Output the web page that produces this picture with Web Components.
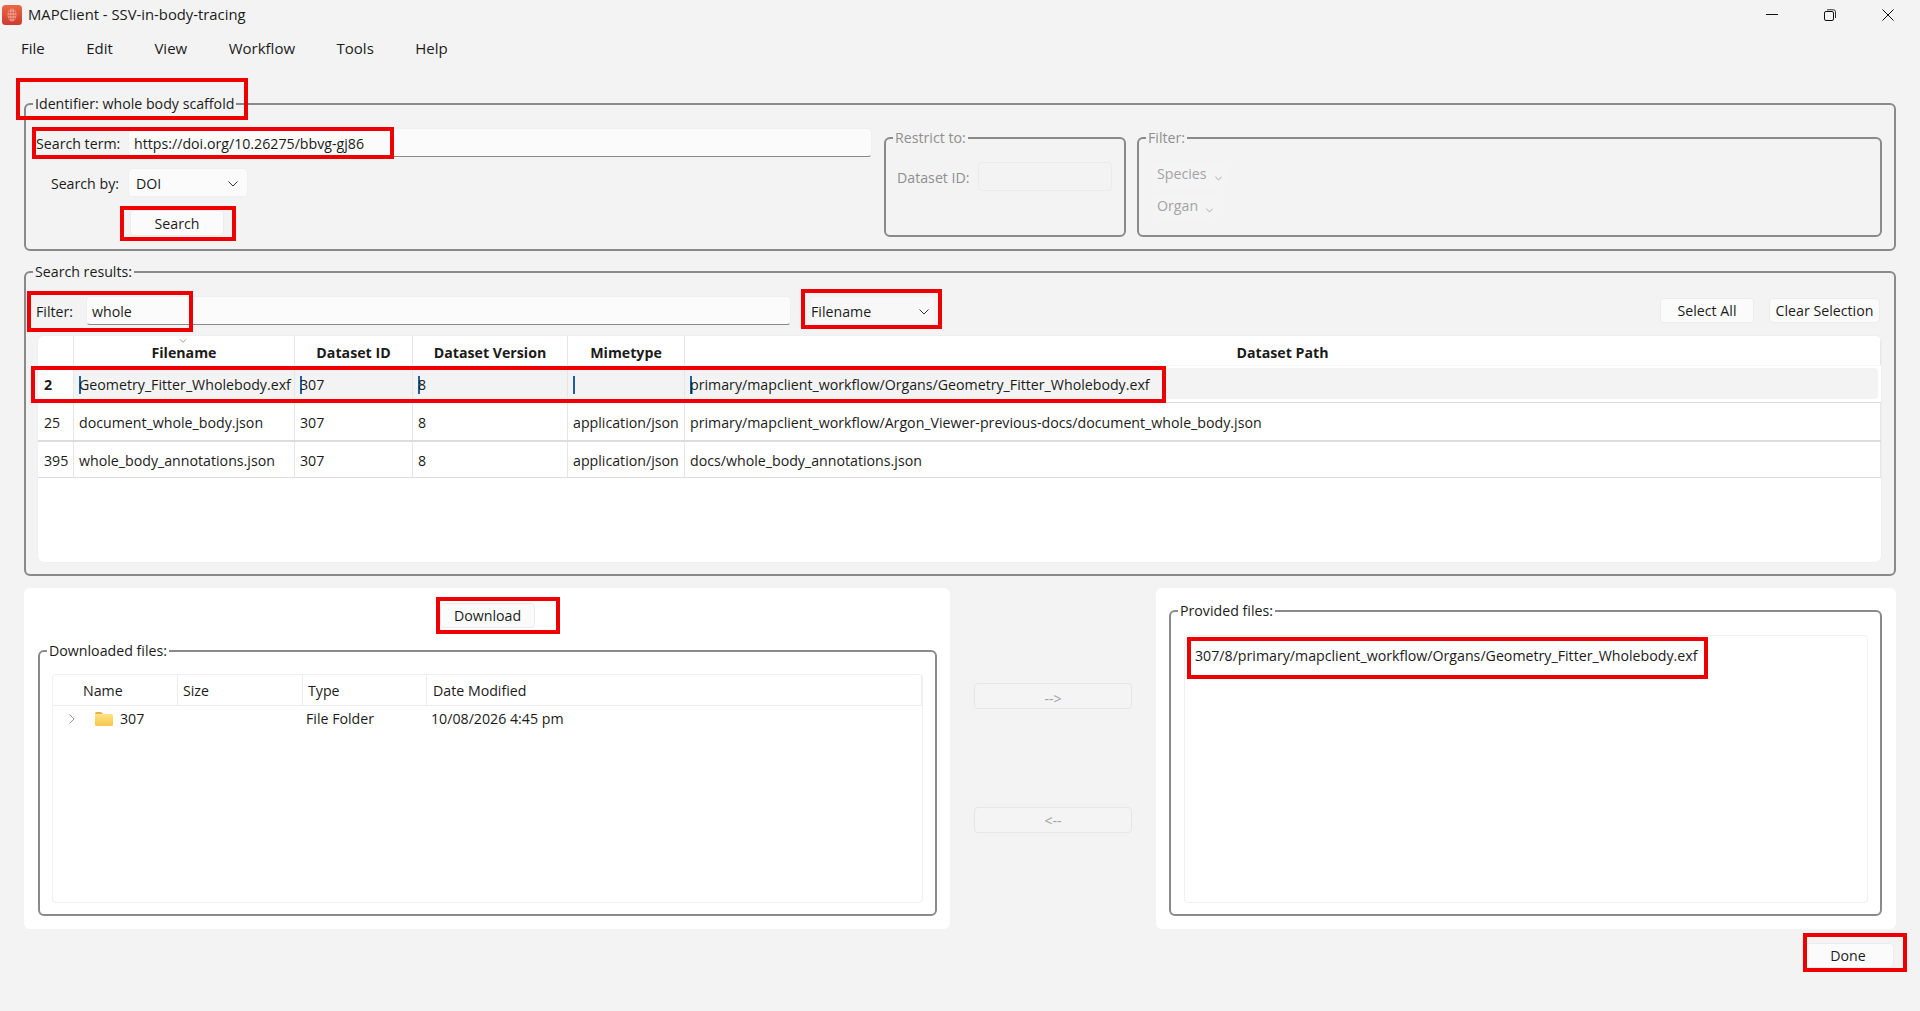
<!DOCTYPE html>
<html>
<head>
<meta charset="utf-8">
<title>MAPClient</title>
<style>
  html, body { margin: 0; height: 100%; background: #f3f3f3; overflow: hidden; }
  body { font: 14.2px/20px "Open Sans", "Noto Sans", "Liberation Sans", sans-serif; color: #1b1b1b; }
</style>
</head>
<body>
<map-client></map-client>

<script>
// shared bits for the small controls
const CHEVRON = `<svg width="10" height="6" viewBox="0 0 10 6"><path d="M.5.5 5 5 9.5.5" fill="none" stroke="currentColor" stroke-width="1"/></svg>`;

// BUTTON
class UiButton extends HTMLElement {
    constructor(){
        super();
        this.attachShadow({mode:"open"});
        this.shadowRoot.innerHTML = `
        <style>
          :host { display: flex; align-items: center; justify-content: center; box-sizing: border-box; height: 26px; padding-top: 1px;
                  background: #fbfbfb; border: 1px solid #ececec; border-radius: 4px; }
          :host([disabled]) { background: #f4f4f4; border-color: #e6e6e6; color: #a3a3a3; }
        </style>
        <slot></slot>`;
    }
}
customElements.define("ui-button", UiButton);

// LINE EDIT
class UiInput extends HTMLElement {
    constructor(){
        super();
        this.attachShadow({mode:"open"});
        this.shadowRoot.innerHTML = `
        <style>
          :host { display: flex; align-items: center; box-sizing: border-box; height: 29px; padding: 2px 5px 0;
                  background: #fbfbfb; border: 1px solid #efefef; border-bottom-color: #8a8a8a; border-radius: 4px; }
          :host([disabled]) { background: #f3f3f3; border-color: #ebebeb; }
        </style>
        <slot></slot>`;
    }
}
customElements.define("ui-input", UiInput);

// COMBO BOX
class UiCombo extends HTMLElement {
    constructor(){
        super();
        this.attachShadow({mode:"open"});
        this.shadowRoot.innerHTML = `
        <style>
          :host { display: flex; align-items: center; justify-content: space-between; box-sizing: border-box; height: 29px;
                  padding: 2px 9px 0 7px; background: #fbfbfb; border: 1px solid #f0f0f0; border-radius: 4px; }
          :host([flat]) { height: 24px; padding: 0 4px; background: #f4f4f4; border: 0; color: #a3a3a3; }
          :host([flat]) svg { width: 7px; height: 5px; margin-top: 8px; }
          svg { display: block; flex: none; color: #333; }
          :host([flat]) svg { color: #888; }
        </style>
        <slot></slot>${CHEVRON}`;
    }
}
customElements.define("ui-combo", UiCombo);

// GROUP BOX - a real fieldset so the legend cuts the frame line
class GroupBox extends HTMLElement {
    constructor(){
        super();
        this.attachShadow({mode:"open"});
        this.shadowRoot.innerHTML = `
        <style>
          :host { display: flex; flex-direction: column; box-sizing: border-box; }
          fieldset { flex: 1; display: flex; flex-direction: column; min-width: 0; min-height: 0; margin: 0;
                     padding: var(--pad, 14px 12px 12px 10px); border: 2px solid #8a8a8a; border-radius: 6px; }
          legend { padding: 0 2px; margin-left: var(--lg, -3px); line-height: 20px; }
          :host([disabled]) fieldset { color: #8f8f8f; }
        </style>
        <fieldset><legend></legend><slot></slot></fieldset>`;
    }
    connectedCallback(){
        this.shadowRoot.querySelector("legend").textContent = this.getAttribute("label");
    }
}
customElements.define("group-box", GroupBox);

// TITLE BAR
class TitleBar extends HTMLElement {
    constructor(){
        super();
        this.attachShadow({mode:"open"});
        this.shadowRoot.innerHTML = `
        <style>
          :host { display: flex; align-items: center; box-sizing: border-box; height: 30px; padding: 0 26px 2px 2px; font-size: 14.8px; }
          .logo { flex: none; margin-right: 6px; margin-top: 2px; }
          .title { flex: 1; }
          .ctl { display: flex; gap: 46px; align-items: center; margin-top: 2px; }
          svg { display: block; }
        </style>
        <svg class="logo" width="20" height="20" viewBox="0 0 20 20">
          <defs><linearGradient id="lg" x1="0" y1="0" x2="0" y2="1"><stop offset="0" stop-color="#ea6a45"/><stop offset="1" stop-color="#cd3a30"/></linearGradient></defs>
          <rect width="20" height="20" rx="3.500" fill="url(#lg)"/>
          <ellipse cx="10" cy="10" rx="4.500" ry="6.500" fill="#f0a08c"/>
          <path d="M5.800 7.500h8.400M5.500 10.500h9M6.200 13.500h7.600M10 3.500v13M8 4.500c-1.200 3.500-1.200 7.500 0 11M12 4.500c1.200 3.500 1.200 7.500 0 11" fill="none" stroke="#dc5a48" stroke-width=".7"/>
        </svg>
        <span class="title"><slot></slot></span>
        <div class="ctl">
          <svg width="12" height="12" viewBox="0 0 12 12"><path d="M0 5.500h12" stroke="#111" stroke-width="1"/></svg>
          <svg width="12" height="12" viewBox="0 0 12 12"><rect x=".5" y="2.500" width="9" height="9" rx="1.500" fill="#f3f3f3" stroke="#111"/><path d="M3 .8h6.500a2 2 0 0 1 2 2V9" fill="none" stroke="#333"/></svg>
          <svg width="12" height="12" viewBox="0 0 12 12"><path d="M.5.500l11 11M11.500.500l-11 11" stroke="#111" stroke-width="1"/></svg>
        </div>`;
    }
}
customElements.define("title-bar", TitleBar);

// MENU BAR
class MenuBar extends HTMLElement {
    constructor(){
        super();
        this.attachShadow({mode:"open"});
        this.shadowRoot.innerHTML = `
        <style>
          :host { display: flex; align-items: center; height: 36px; padding: 0 0 0 21px; box-sizing: border-box; gap: 41.5px; font-size: 15px; }
        </style>
        <slot></slot>`;
    }
}
customElements.define("menu-bar", MenuBar);

// ONE ROW OF THE RESULTS TABLE
class ResultRow extends HTMLElement {
    constructor(){
        super();
        this.attachShadow({mode:"open"});
        this.shadowRoot.innerHTML = `
        <style>
          :host { display: grid; grid-template-columns: 36px 221px 118px 155px 117px 1fr; align-items: stretch;
                  box-sizing: border-box; height: 37px; border-bottom: 1px solid #dcdcdc; background: #fff; }
          :host([thick]) { height: 39px; border-bottom-width: 2px; }
          :host([last]) { height: 36px; }
          :host([head]) { height: 30px; border-bottom: 1px solid #f6f6f6; font-weight: 700; }
          div { display: flex; align-items: center; padding: 3px 0 0 5px; border-right: 1px solid #e6e6e6; white-space: nowrap; overflow: hidden; min-width: 0; }
          div:first-of-type { padding-left: 6px; }
          :host([head]) div { justify-content: center; padding: 4px 0 0; }
          :host([selected]) div { margin: 2px 0 3px; background: #f3f3f3; }
          :host([selected]) div:first-of-type { background: #fff; font-weight: 700; }
          :host([selected]) div:last-child { margin-right: 3px; border-right: 0; border-radius: 0 4px 4px 0; }
          :host([selected]) div:not(:first-of-type)::before { content: ""; flex: none; width: 2px; height: 18px; margin-right: -2px; background: #1a5fa8; }
        </style>`;
    }
    connectedCallback(){
        JSON.parse(this.getAttribute("cells")).forEach(text => {
            const cell = document.createElement("div");
            cell.append(document.createTextNode(text));
            this.shadowRoot.appendChild(cell);
        });
    }
}
customElements.define("result-row", ResultRow);

// RESULTS TABLE
class ResultsTable extends HTMLElement {
    constructor(){
        super();
        this.attachShadow({mode:"open"});
        this.shadowRoot.innerHTML = `
        <style>
          :host { display: block; position: relative; height: 226px; background: #fff; border-radius: 6px; overflow: hidden; box-shadow: 0 0 0 1px #efefef; }
          .sort { position: absolute; left: 141px; top: 3px; color: #666; }
          .sort svg { display: block; width: 8px; height: 4px; }
        </style>
        <slot></slot><span class="sort">${CHEVRON}</span>`;
    }
}
customElements.define("results-table", ResultsTable);

// DOWNLOADED FILES TREE
class FileTree extends HTMLElement {
    constructor(){
        super();
        this.attachShadow({mode:"open"});
        this.shadowRoot.innerHTML = `
        <style>
          :host { display: block; flex: 1; background: #fff; border: 1px solid #f0f0f0; border-radius: 4px; }
          .row { display: grid; grid-template-columns: 125px 125px 124px 1fr; align-items: center; }
          .head { height: 30px; border-bottom: 1px solid #ededed; }
          .head span { height: 100%; box-sizing: border-box; display: flex; align-items: center; border-right: 1px solid #ededed; padding: 2px 0 0 5px; }
          .head span:first-child { padding-left: 30px; }
          .head span:last-child { padding-left: 6px; }
          .body { height: 26px; }
          .body span { padding-left: 4px; }
          .body span:nth-child(3) { padding-left: 3px; }
          .name { display: flex; align-items: center; padding-left: 16px !important; }
          .name svg:first-child { margin-right: 20px; }
          .name svg + svg { margin-right: 7px; }
        </style>
        <div class="row head"><span>Name</span><span>Size</span><span>Type</span><span>Date Modified</span></div>
        <div class="row body">
          <span class="name">
            <svg width="6" height="10" viewBox="0 0 6 10"><path d="M.5.500 5 5 .5 9.500" fill="none" stroke="#999"/></svg>
            <svg width="18" height="14" viewBox="0 0 18 14">
              <defs><linearGradient id="fg" x1="0" y1="0" x2="0" y2="1"><stop offset="0" stop-color="#fde38a"/><stop offset="1" stop-color="#f6c648"/></linearGradient></defs>
              <path d="M0 1.500A1.500 1.500 0 0 1 1.500 0h4.300L8 2H0z" fill="#e8b23a"/>
              <rect y="2" width="18" height="12" rx="1.200" fill="url(#fg)"/>
            </svg>
            307
          </span>
          <span></span><span>File Folder</span><span>10/08/2026 4:45 pm</span>
        </div>`;
    }
}
customElements.define("file-tree", FileTree);

// RED ANNOTATION RECTANGLE - sits over the window, drawn by hand on the original
class RedBox extends HTMLElement {
    constructor(){
        super();
        this.attachShadow({mode:"open"});
        this.shadowRoot.innerHTML = `
        <style>
          :host { position: absolute; box-sizing: border-box; border: 4px solid #ee0000; pointer-events: none; }
        </style>`;
    }
    connectedCallback(){
        const [x, y, w, h] = this.getAttribute("at").split(",");
        this.style.cssText = `left:${x}px;top:${y}px;width:${w}px;height:${h}px`;
    }
}
customElements.define("red-box", RedBox);

// THE WHOLE WINDOW
class MapClient extends HTMLElement {
    constructor(){
        super();
        this.attachShadow({mode:"open"});
        this.shadowRoot.innerHTML = `
        <style>
          :host { display: block; position: relative; width: 1920px; height: 1011px; overflow: hidden; }
          main { display: flex; flex-direction: column; padding: 28px 24px 0; }
          .top { display: flex; gap: 12px; height: 109px; }
          .search { width: 836px; flex: none; display: flex; flex-direction: column; }
          .line { display: flex; align-items: center; }
          .lbl { width: 92px; flex: none; padding-top: 2px; }
          .right { text-align: right; width: 83px; margin-right: 9px; padding-top: 2px; }
          .restrict { width: 242px; flex: none; --pad: 14px 12px 10px 11px; --lg: -4px; color: #9a9a9a; }
          .filter { flex: 1; margin-left: -1px; --pad: 14px 10px 8px 14px; --lg: -7px; color: #9a9a9a; }
          .filter ui-combo:first-child { width: 73px; }
          .filter ui-combo + ui-combo { width: 64px; margin-top: 8px; }
          .filter ui-combo { box-sizing: border-box; }
          .fline { display: flex; align-items: center; margin: 0 1px 11px -2px; }
          .results { margin-top: 11px; --pad: 14px 13px 12px 12px; --lg: -5px; }
          .cards { display: flex; margin-top: 12px; height: 341px; }
          .card { background: #fff; border-radius: 6px; box-sizing: border-box; display: flex; flex-direction: column; }
          .left { width: 926px; flex: none; padding: 15px 13px 13px 14px; }
          .mid { width: 206px; flex: none; box-sizing: border-box; padding: 95px 24px 0; display: flex; flex-direction: column; gap: 98px; }
          .prov { flex: 1; padding: 13px 14px 13px 13px; }
          .prov group-box, .left group-box { flex: 1; }
          .list { flex: 1; background: #fff; border: 1px solid #f0f0f0; border-radius: 4px; padding: 10px 10px; }
          .foot { display: flex; justify-content: flex-end; margin-top: 14px; padding-right: 2px; }
        </style>
        <title-bar>MAPClient - SSV-in-body-tracing</title-bar>
        <menu-bar><span>File</span><span>Edit</span><span>View</span><span>Workflow</span><span>Tools</span><span>Help</span></menu-bar>
        <main>
          <group-box label="Identifier: whole body scaffold">
            <div class="top">
              <div class="search">
                <div class="line"><span class="lbl">Search term:</span><ui-input style="flex:1">https://doi.org/10.26275/bbvg-gj86</ui-input></div>
                <div class="line" style="margin-top:11px"><span class="right">Search by:</span><ui-combo style="width:120px">DOI</ui-combo></div>
                <div class="line" style="margin:13px 0 0 94px"><ui-button style="width:94px">Search</ui-button></div>
              </div>
              <group-box class="restrict" label="Restrict to:" disabled>
                <div class="line"><span style="width:81px;padding-top:2px">Dataset ID:</span><ui-input disabled style="width:134px"></ui-input></div>
              </group-box>
              <group-box class="filter" label="Filter:" disabled>
                <ui-combo flat>Species</ui-combo>
                <ui-combo flat>Organ</ui-combo>
              </group-box>
            </div>
          </group-box>

          <group-box class="results" label="Search results:">
            <div class="fline">
              <span style="width:50px;flex:none;padding-top:2px">Filter:</span>
              <ui-input style="width:705px;margin-right:19px">whole</ui-input>
              <ui-combo style="width:125px;background:#f8f8f8;border-color:#f3f3f3;padding-left:0;padding-right:5px">Filename</ui-combo>
              <ui-button style="width:94px;height:25px;margin-left:auto;margin-right:15px">Select All</ui-button>
              <ui-button style="width:111px;height:25px">Clear Selection</ui-button>
            </div>
            <results-table>
              <result-row head cells='["","Filename","Dataset ID","Dataset Version","Mimetype","Dataset Path"]'></result-row>
              <result-row selected cells='["2","Geometry_Fitter_Wholebody.exf","307","8","","primary/mapclient_workflow/Organs/Geometry_Fitter_Wholebody.exf"]'></result-row>
              <result-row thick cells='["25","document_whole_body.json","307","8","application/json","primary/mapclient_workflow/Argon_Viewer-previous-docs/document_whole_body.json"]'></result-row>
              <result-row last cells='["395","whole_body_annotations.json","307","8","application/json","docs/whole_body_annotations.json"]'></result-row>
            </results-table>
          </group-box>

          <div class="cards">
            <div class="card left">
              <ui-button style="width:95px;height:25px;align-self:center;margin-bottom:13px">Download</ui-button>
              <group-box label="Downloaded files:" style="--pad:13px 12px 11px 12px;--lg:-5px">
                <file-tree></file-tree>
              </group-box>
            </div>
            <div class="mid"><ui-button disabled style="padding-top:5px">--&gt;</ui-button><ui-button disabled style="padding-top:2px">&lt;--</ui-button></div>
            <div class="card prov">
              <group-box label="Provided files:" style="--pad:14px 12px 11px 13px;--lg:-6px">
                <div class="list">307/8/primary/mapclient_workflow/Organs/Geometry_Fitter_Wholebody.exf</div>
              </group-box>
            </div>
          </div>

          <div class="foot"><ui-button style="width:92px;height:25px">Done</ui-button></div>
        </main>

        <red-box at="16,78,232,42"></red-box>
        <red-box at="32,127,362,32"></red-box>
        <red-box at="120,206,116,35"></red-box>
        <red-box at="27,291,166,41"></red-box>
        <red-box at="801,289,141,40"></red-box>
        <red-box at="31,366,1135,37"></red-box>
        <red-box at="436,597,124,37"></red-box>
        <red-box at="1187,637,521,42"></red-box>
        <red-box at="1803,933,104,39"></red-box>`;
    }
}
customElements.define("map-client", MapClient);
</script>
</body>
</html>
